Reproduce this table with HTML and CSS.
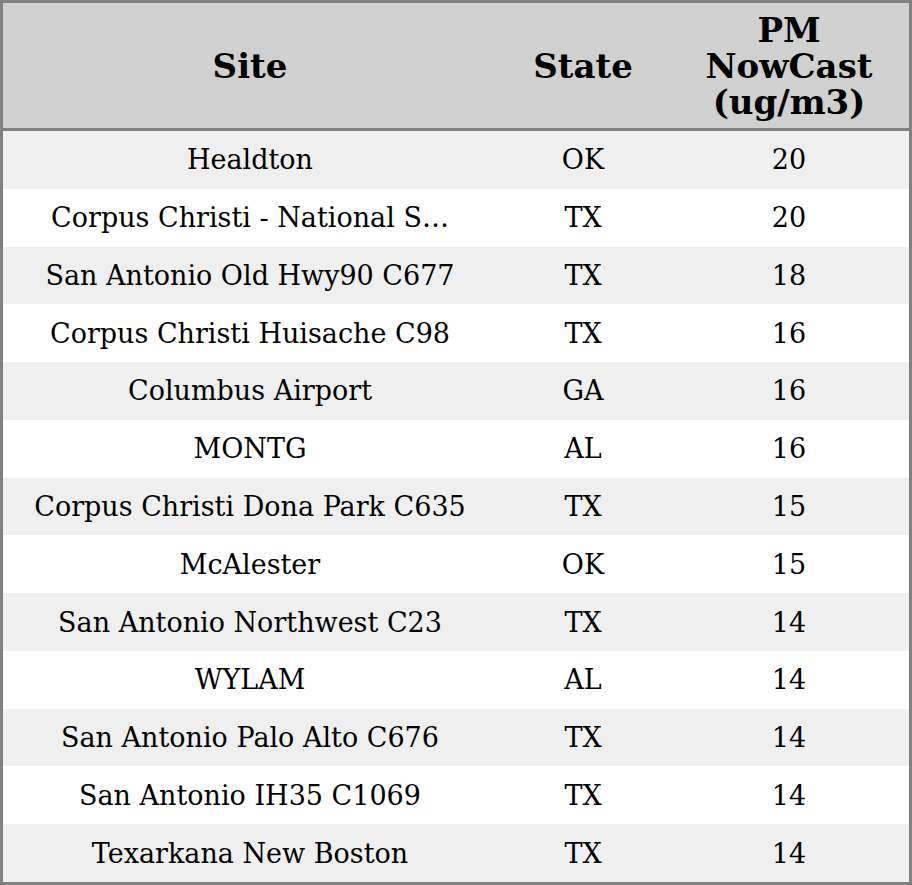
FILE: index.html
```html
<!DOCTYPE html>
<html>
<head>
<meta charset="utf-8">
<link rel="stylesheet" href="styles.css">
</head>
<body>
<table class="aq">
  <thead>
    <tr>
      <th class="c-site">Site</th>
      <th class="c-state">State</th>
      <th class="c-pm">PM<br>NowCast<br>(ug/m3)</th>
    </tr>
  </thead>
  <tbody>
    <tr><td>Healdton</td><td>OK</td><td>20</td></tr>
    <tr><td>Corpus Christi - National S…</td><td>TX</td><td>20</td></tr>
    <tr><td>San Antonio Old Hwy90 C677</td><td>TX</td><td>18</td></tr>
    <tr><td>Corpus Christi Huisache C98</td><td>TX</td><td>16</td></tr>
    <tr><td>Columbus Airport</td><td>GA</td><td>16</td></tr>
    <tr><td>MONTG</td><td>AL</td><td>16</td></tr>
    <tr><td>Corpus Christi Dona Park C635</td><td>TX</td><td>15</td></tr>
    <tr><td>McAlester</td><td>OK</td><td>15</td></tr>
    <tr><td>San Antonio Northwest C23</td><td>TX</td><td>14</td></tr>
    <tr><td>WYLAM</td><td>AL</td><td>14</td></tr>
    <tr><td>San Antonio Palo Alto C676</td><td>TX</td><td>14</td></tr>
    <tr><td>San Antonio IH35 C1069</td><td>TX</td><td>14</td></tr>
    <tr><td>Texarkana New Boston</td><td>TX</td><td>14</td></tr>
  </tbody>
</table>
</body>
</html>
```
FILE: styles.css
```css
html, body {
  margin: 0;
  padding: 0;
  background: #ffffff;
}
.aq {
  width: 912px;
  height: 885px;
  border-collapse: collapse;
  border: 3px solid #808080;
  font-family: "DejaVu Serif", serif;
  color: #000;
  table-layout: fixed;
}
.aq th {
  background: #d0d0d0;
  font-weight: bold;
  font-size: 34px;
  line-height: 36px;
  height: 125px;
  padding: 0;
  text-align: center;
  vertical-align: middle;
  border-bottom: 3px solid #808080;
}
.c-site { width: 494px; }
.c-state { width: 172px; }
.aq td {
  font-size: 27px;
  text-align: center;
  vertical-align: middle;
  padding: 0;
  height: 57.77px;
}
.aq tbody tr:nth-child(odd) td {
  background: #efefef;
}
```
